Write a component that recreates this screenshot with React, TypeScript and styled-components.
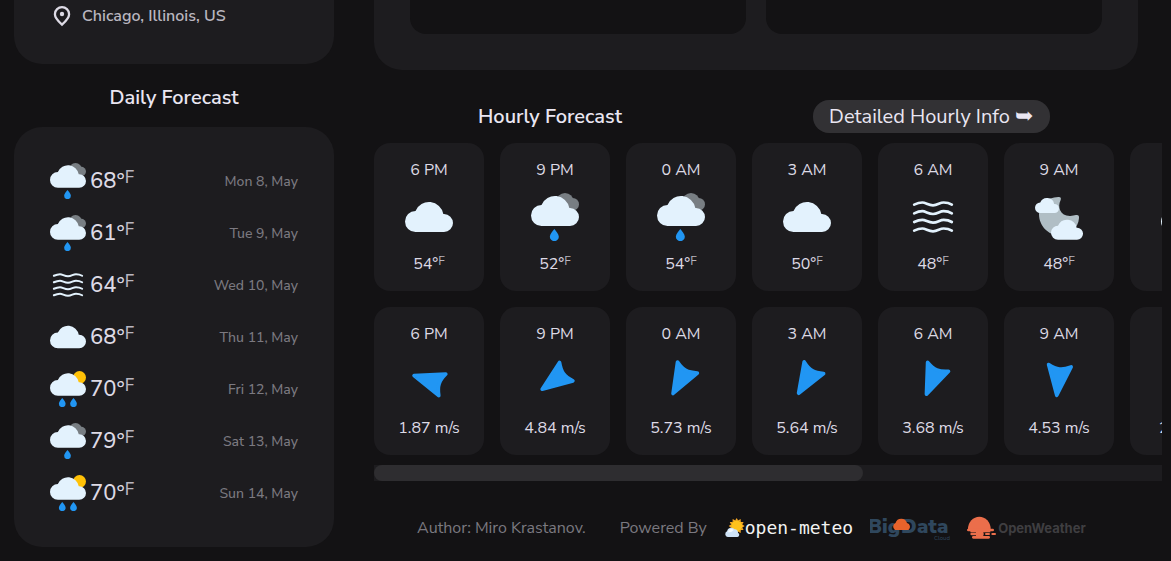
import React from "react";
import styled, { createGlobalStyle } from "styled-components";

const color = {
  background: "#131214",
  onBackground: "#eae6f2",
  surface: "#1d1c1f",
  onSurface: "#dddae5",
  muted: "#7b7980",
  soft: "#b9b6bf",
  pill: "#323134",
  thumb: "#2e2d30",
  cloud: "#e3f2fd",
  grayCloud: "#787e83",
  blue: "#2196f3",
  sun: "#ffc107",
  moon: "#b0bec5",
};

const GlobalStyle = createGlobalStyle`
  *, *::before, *::after { box-sizing: border-box; }
  body {
    margin: 0;
    background: ${color.background};
    color: ${color.onSurface};
    font-family: "Nunito Sans", Lato, "Open Sans", sans-serif;
    font-size: 16px;
    line-height: 22px;
  }
  h2, p, ul, ol { margin: 0; padding: 0; }
  ul, ol { list-style: none; }
`;

const Page = styled.main`
  display: grid;
  grid-template-columns: 320px minmax(0, 1fr);
  gap: 40px;
  padding: 0 9px 14px 14px;
`;

const Column = styled.div`
  min-width: 0;
`;

const CurrentCard = styled.section`
  height: 64px;
  padding: 4px 36px;
  border-radius: 0 0 28px 28px;
  background: ${color.surface};
`;

const Place = styled.p`
  display: flex;
  align-items: center;
  gap: 8px;
  color: ${color.soft};
  font-weight: 600;
  line-height: 24px;
`;

const SectionTitle = styled.h2`
  color: ${color.onBackground};
  font-size: 20px;
  font-weight: 600;
  line-height: 26px;
  text-align: center;
`;

const DailyTitle = styled(SectionTitle)`
  margin: 21px 0 16px;
`;

const DailyCard = styled.ul`
  padding: 28px 36px;
  border-radius: 28px;
  background: ${color.surface};
`;

const DailyRow = styled.li`
  display: flex;
  align-items: center;
  gap: 4px;
  height: 52px;
`;

const DailyTemp = styled.span`
  font-size: 22px;
  font-weight: 500;
  line-height: 32px;
`;

const Unit = styled.sup<{ $large?: boolean }>`
  color: ${color.soft};
  font-size: ${(p) => (p.$large ? 17 : 12)}px;
  line-height: 0;
  vertical-align: ${(p) => (p.$large ? 5 : 4)}px;
`;

const DayLabel = styled.span`
  margin-left: auto;
  padding-top: 2px;
  color: ${color.muted};
  font-size: 14px;
  font-weight: 500;
`;

const HighlightsCard = styled.section`
  display: grid;
  grid-template-columns: 1fr 1fr;
  gap: 20px;
  height: 70px;
  margin-right: 24px;
  padding: 0 36px 36px;
  border-radius: 0 0 28px 28px;
  background: ${color.surface};
`;

const HighlightTile = styled.div`
  border-radius: 0 0 16px 16px;
  background: ${color.background};
`;

const HourlyHeader = styled.header`
  display: flex;
  align-items: center;
  justify-content: space-between;
  margin: 30px 0 10px;
  padding: 0 112px 0 104px;
`;

const DetailButton = styled.button`
  height: 33px;
  padding: 0 17px 0 16px;
  border: 0;
  border-radius: 16px;
  background: ${color.pill};
  color: ${color.onBackground};
  font-family: inherit;
  font-size: 20px;
  line-height: 26px;
  white-space: nowrap;
`;

const ButtonArrow = styled.span`
  font-size: 22px;
`;

const HourlyScroller = styled.div`
  display: grid;
  gap: 16px;
  overflow-x: auto;
  scrollbar-width: none;
`;

const HourRow = styled.ol`
  display: flex;
  gap: 16px;
`;

const HourCard = styled.li`
  display: flex;
  flex: 0 0 110px;
  flex-direction: column;
  align-items: center;
  gap: 12px;
  padding: 16px 0;
  border-radius: 16px;
  background: ${color.surface};
  white-space: nowrap;
`;

const ScrollTrack = styled.div`
  margin-top: 10px;
  background: ${color.surface};
`;

const ScrollThumb = styled.div`
  width: 62%;
  height: 16px;
  border-radius: 8px;
  background: ${color.thumb};
`;

const Footer = styled.footer`
  display: flex;
  align-items: center;
  gap: 17px;
  height: 32px;
  margin-top: 31px;
  padding-left: 43px;
  color: ${color.muted};
  white-space: nowrap;
`;

const Author = styled.p`
  margin-right: 17px;
`;

const LogoLink = styled.a`
  display: flex;
  align-items: center;
  color: inherit;
  text-decoration: none;
`;

const MeteoName = styled.span`
  color: #f2f2f2;
  font-family: "DejaVu Sans Mono", monospace;
  font-size: 18px;
`;

const WeatherName = styled.span`
  margin-left: 2px;
  color: #3f3e41;
  font-family: Inter, sans-serif;
  font-size: 13px;
  font-weight: 700;
`;

const CLOUD =
  "M31.5 90A31.5 31.5 0 0 1 31.5 27A43.75 43.75 0 0 1 115 36L117 36A27 27 0 0 1 117 90Z";
const DROP = "M0 0C5 7 13.5 15 13.5 23A13.5 13.5 0 0 1 -13.5 23C-13.5 15 -5 7 0 0Z";
const WAVE =
  "M15.5 35C24 31 30 28.5 40 28.5S58 37 72 37S92 28.5 104 28.5S122 31 128.5 35";

type Sky = "cloud" | "rain" | "sunRain" | "fog" | "night";

function SkyIcon({ kind, size }: { kind: Sky; size: number }) {
  return (
    <svg width={size} height={size} viewBox="0 0 144 144" aria-hidden="true">
      {kind === "cloud" && <path d={CLOUD} transform="translate(0 27)" fill={color.cloud} />}
      {kind === "rain" && (
        <>
          <g fill={color.grayCloud}>
            <circle cx="102" cy="26" r="26" />
            <circle cx="125" cy="34" r="19" />
          </g>
          <path d={CLOUD} transform="translate(0 9)" fill={color.cloud} />
          <path d={DROP} transform="translate(70 108)" fill={color.blue} />
        </>
      )}
      {kind === "sunRain" && (
        <>
          <circle cx="118" cy="26" r="26" fill={color.sun} />
          <path d={CLOUD} transform="translate(0 9)" fill={color.cloud} />
          <path d={DROP} transform="translate(49 108)" fill={color.blue} />
          <path d={DROP} transform="translate(94 108)" fill={color.blue} />
        </>
      )}
      {kind === "fog" && (
        <g fill="none" stroke={color.cloud} strokeWidth="8" strokeLinecap="round">
          {[0, 26, 52, 78].map((y) => (
            <path key={y} d={WAVE} transform={`translate(0 ${y})`} />
          ))}
        </g>
      )}
      {kind === "night" && (
        <>
          <path
            d="M70 12Q80 11 77 21C66 42 76 70 106 69Q115 68 123 66Q133 64 132 75C130 105 105 128 75 128C40 128 12 98 12 64C12 35 35 13 70 12Z"
            fill={color.moon}
          />
          <path d={CLOUD} transform="translate(0 15) scale(.5)" fill={color.cloud} />
          <path d={CLOUD} transform="translate(48 80) scale(.667)" fill={color.cloud} />
        </>
      )}
    </svg>
  );
}

function WindIcon({ angle }: { angle: number }) {
  return (
    <svg width="48" height="48" viewBox="-70 -70 144 144" aria-hidden="true">
      <path
        d="M0 -45L34 44Q14 34 0 34Q-14 34 -34 44Z"
        transform={`rotate(${angle})`}
        fill={color.blue}
        stroke={color.blue}
        strokeWidth="11"
        strokeLinejoin="round"
      />
    </svg>
  );
}

function PinIcon() {
  return (
    <svg width="24" height="24" viewBox="0 0 24 24" aria-hidden="true">
      <path
        d="M12 20.6C7.3 16.4 4.900 13.1 4.900 10.2C4.900 5.900 8.300 3.200 12 3.200S19.100 5.900 19.100 10.2C19.100 13.1 16.7 16.4 12 20.6Z"
        fill="none"
        stroke={color.onSurface}
        strokeWidth="2.3"
      />
      <circle cx="12" cy="10" r="2.2" fill={color.onSurface} />
    </svg>
  );
}

function MeteoMark() {
  const rays = Array.from({ length: 12 }, (_, i) => i * 30);
  return (
    <svg width="21" height="20" viewBox="0 0 63 60" aria-hidden="true">
      <g transform="translate(38 24)">
        {rays.map((a) => (
          <path key={a} d="M-5 -16L0 -24L5 -16Z" transform={`rotate(${a})`} fill="#f9a825" />
        ))}
        <circle r="17" fill="#ffc21c" />
      </g>
      <path
        d="M11 57A9 9 0 0 1 9 40A13 13 0 0 1 32 34A9 9 0 0 1 42 44A7 7 0 0 1 37 57Z"
        fill="#cfe3f7"
      />
      <path d="M12 42A10 10 0 0 1 29 36Q22 45 12 42Z" fill="#f3f9ff" />
    </svg>
  );
}

function BigDataLogo() {
  return (
    <svg width="80" height="24" viewBox="0 0 80 24" role="img" aria-label="BigData Cloud">
      <g fill="#2f475d" fontWeight="900" fontSize="20">
        <text x="-2" y="17">Big</text>
        <text x="31" y="17">D</text>
        <text x="47" y="17">ata</text>
      </g>
      <text x="64" y="24" fill="#2f475d" fontSize="6">
        Cloud
      </text>
      <path
        d="M25 14A4 4 0 0 1 25.500 7A6 6 0 0 1 37 7A4 4 0 0 1 38.500 14Z"
        fill="#e8632b"
      />
    </svg>
  );
}

function OpenWeatherMark() {
  return (
    <svg width="29" height="24" viewBox="0 0 87 72" aria-hidden="true">
      <g fill="#eb6e4b">
        <path d="M3 39A34 37 0 0 1 71 39Z" />
        <rect x="0" y="38" width="81" height="8" rx="4" />
        <rect x="10" y="44" width="60" height="5" />
        <rect x="10" y="50" width="40" height="8" rx="4" />
        <rect x="54" y="51" width="15" height="6" rx="3" />
        <rect x="73" y="51" width="14" height="6" rx="3" />
        <rect x="27" y="48" width="22" height="15" />
        <rect x="15" y="60" width="54" height="8" rx="4" />
      </g>
    </svg>
  );
}

const days: { label: string; temp: number; sky: Sky }[] = [
  { label: "Mon 8, May", temp: 68, sky: "rain" },
  { label: "Tue 9, May", temp: 61, sky: "rain" },
  { label: "Wed 10, May", temp: 64, sky: "fog" },
  { label: "Thu 11, May", temp: 68, sky: "cloud" },
  { label: "Fri 12, May", temp: 70, sky: "sunRain" },
  { label: "Sat 13, May", temp: 79, sky: "rain" },
  { label: "Sun 14, May", temp: 70, sky: "sunRain" },
];

const hours: { time: string; temp: number; sky: Sky; wind: string; angle: number }[] = [
  { time: "6 PM", temp: 54, sky: "cloud", wind: "1.87", angle: 288 },
  { time: "9 PM", temp: 52, sky: "rain", wind: "4.84", angle: 234 },
  { time: "0 AM", temp: 54, sky: "rain", wind: "5.73", angle: 209 },
  { time: "3 AM", temp: 50, sky: "cloud", wind: "5.64", angle: 211 },
  { time: "6 AM", temp: 48, sky: "fog", wind: "3.68", angle: 203 },
  { time: "9 AM", temp: 48, sky: "night", wind: "4.53", angle: 186 },
  { time: "12 PM", temp: 52, sky: "cloud", wind: "2.6", angle: 180 },
];

export default function App() {
  return (
    <>
      <GlobalStyle />
      <Page>
        <Column>
          <CurrentCard>
            <Place>
              <PinIcon />
              Chicago, Illinois, US
            </Place>
          </CurrentCard>
          <DailyTitle>Daily Forecast</DailyTitle>
          <DailyCard>
            {days.map((day) => (
              <DailyRow key={day.label}>
                <SkyIcon kind={day.sky} size={36} />
                <DailyTemp>
                  {day.temp}°<Unit $large>F</Unit>
                </DailyTemp>
                <DayLabel>{day.label}</DayLabel>
              </DailyRow>
            ))}
          </DailyCard>
        </Column>
        <Column>
          <HighlightsCard>
            <HighlightTile />
            <HighlightTile />
          </HighlightsCard>
          <HourlyHeader>
            <SectionTitle>Hourly Forecast</SectionTitle>
            <DetailButton type="button">
              Detailed Hourly Info <ButtonArrow>➥</ButtonArrow>
            </DetailButton>
          </HourlyHeader>
          <HourlyScroller>
            <HourRow>
              {hours.map((hour) => (
                <HourCard key={hour.time}>
                  <span>{hour.time}</span>
                  <SkyIcon kind={hour.sky} size={48} />
                  <span>
                    {hour.temp}°<Unit>F</Unit>
                  </span>
                </HourCard>
              ))}
            </HourRow>
            <HourRow>
              {hours.map((hour) => (
                <HourCard key={hour.time}>
                  <span>{hour.time}</span>
                  <WindIcon angle={hour.angle} />
                  <span>{hour.wind} m/s</span>
                </HourCard>
              ))}
            </HourRow>
          </HourlyScroller>
          <ScrollTrack>
            <ScrollThumb />
          </ScrollTrack>
          <Footer>
            <Author>Author: Miro Krastanov.</Author>
            <p>Powered By</p>
            <LogoLink href="#open-meteo">
              <MeteoMark />
              <MeteoName>open-meteo</MeteoName>
            </LogoLink>
            <LogoLink href="#bigdatacloud">
              <BigDataLogo />
            </LogoLink>
            <LogoLink href="#openweather">
              <OpenWeatherMark />
              <WeatherName>OpenWeather</WeatherName>
            </LogoLink>
          </Footer>
        </Column>
      </Page>
    </>
  );
}
